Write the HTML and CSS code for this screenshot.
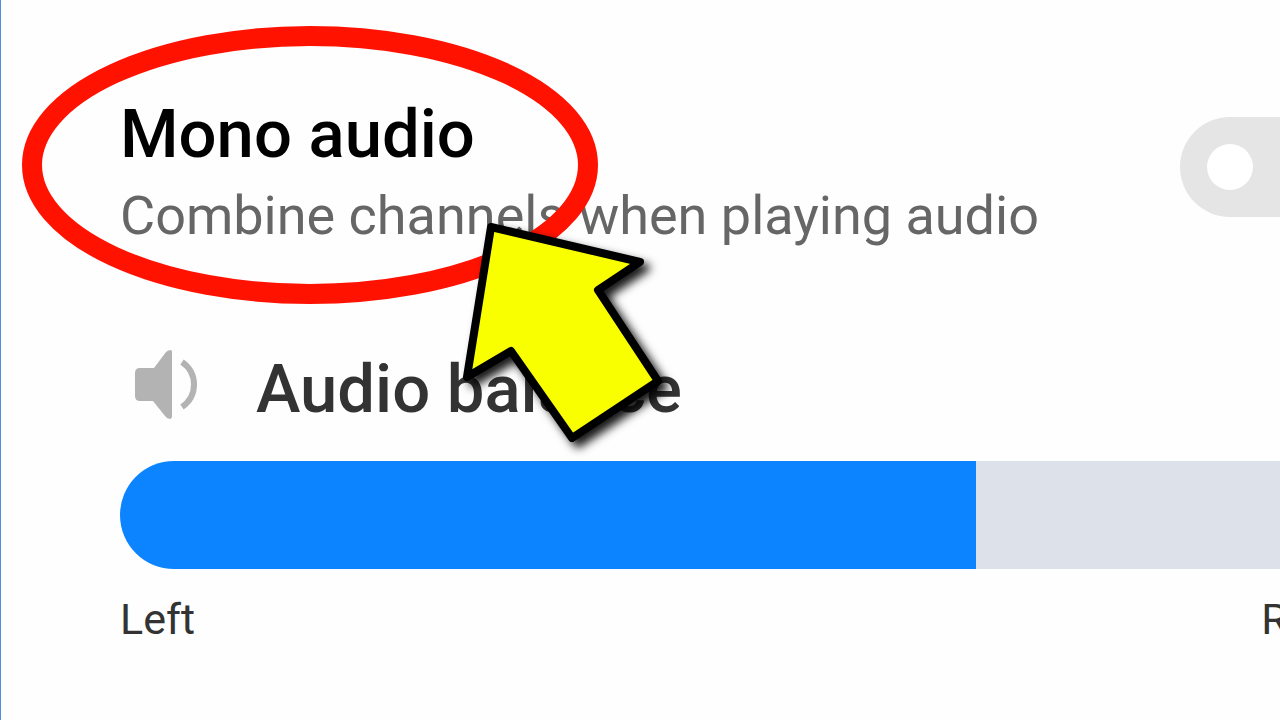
FILE: index.html
```html
<!DOCTYPE html>
<html lang="en">
<head>
    <meta charset="UTF-8">
    <meta name="viewport" content="width=device-width, initial-scale=1.0">
    <title>Audio settings</title>
    <link rel="stylesheet" href="styles.css">
</head>
<body>
    <main class="settings">
        <div class="setting">
            <div class="setting-text">
                <label class="title" for="mono">Mono audio</label>
                <p class="description" id="mono-description">Combine channels when playing audio</p>
            </div>
            <input class="toggle" type="checkbox" id="mono" aria-describedby="mono-description">
        </div>

        <div class="balance">
            <div class="balance-header">
                <svg class="speaker" viewBox="0 0 80 80" aria-hidden="true">
                    <path d="M20 19H34L46 3Q48 1 51 1Q52 1 52 4V66Q52 70 50 70Q47 70 45 67L33 52H20Q15 52 15 47V24Q15 19 20 19Z" fill="#b3b3b3"/>
                    <path d="M62 13C78 24 78 47 62 58" fill="none" stroke="#b3b3b3" stroke-width="6"/>
                </svg>
                <label class="title balance-title" for="balance">Audio balance</label>
            </div>
            <input class="slider" type="range" id="balance" min="0" max="100" value="69" style="--value: 69%">
            <div class="balance-ends">
                <span>Left</span>
                <span>Right</span>
            </div>
        </div>
    </main>

    <svg class="marks" width="700" height="480" viewBox="0 0 700 480" aria-hidden="true">
        <ellipse cx="310" cy="165" rx="278" ry="129" fill="none" stroke="#ff1200" stroke-width="20"/>
        <path class="arrow" d="M491 227L640 262L598 290L658 381L572 438L511 351L467 377Z"/>
    </svg>

    <script>
        const balance = document.getElementById("balance");
        balance.addEventListener("input", () => {
            balance.style.setProperty("--value", balance.value + "%");
        });
    </script>
</body>
</html>
```
FILE: styles.css
```css
* {
    box-sizing: border-box;
}

body {
    position: relative;
    margin: 0;
    min-height: 100vh;
    border-left: 1px solid #4c8fdc;
    background: #fefefe;
    color: #333;
    font-family: Roboto, "Liberation Sans", sans-serif;
    overflow: hidden;
}

/* the panel is wider than the window and runs off its right edge */
.settings {
    display: flex;
    flex-direction: column;
    gap: 106px;
    margin-right: -80px;
    padding: 90px 0 72px 119px;
}

.setting {
    display: flex;
    align-items: center;
    justify-content: space-between;
}

.setting-text {
    display: flex;
    flex-direction: column;
    gap: 11px;
}

.title {
    color: #000;
    font-size: 67px;
    font-weight: 500;
    line-height: 88px;
}

.description {
    margin: 0;
    color: #666;
    font-size: 54px;
    line-height: 54px;
}

.toggle {
    appearance: none;
    display: flex;
    align-items: center;
    flex-shrink: 0;
    width: 180px;
    height: 100px;
    margin: 0;
    padding: 0 27px;
    border-radius: 50px;
    background: #e5e5e5;
    cursor: pointer;
}

.toggle::before {
    content: "";
    width: 46px;
    height: 46px;
    border-radius: 50%;
    background: #fff;
}

.toggle:checked {
    justify-content: flex-end;
    background: #0d84ff;
}

.balance {
    display: flex;
    flex-direction: column;
}

.balance-header {
    display: flex;
    align-items: center;
    gap: 56px;
}

.speaker {
    width: 80px;
    height: 80px;
}

.balance-title {
    color: #333;
    line-height: 80px;
}

.slider {
    appearance: none;
    width: 100%;
    height: 108px;
    margin: 32px 0 26px;
    border-radius: 54px;
    background: linear-gradient(to right, #0d84ff var(--value), #dde1ea var(--value));
    cursor: pointer;
}

.slider::-webkit-slider-thumb {
    appearance: none;
    width: 1px;
    height: 108px;
    background: transparent;
}

.balance-ends {
    display: flex;
    justify-content: space-between;
    font-size: 43px;
    line-height: 48px;
}

.marks {
    position: absolute;
    top: 0;
    left: -1px;
    pointer-events: none;
}

.arrow {
    fill: #faff00;
    stroke: #000;
    stroke-width: 8px;
    stroke-linejoin: round;
    filter: drop-shadow(6px 6px 5px rgba(0, 0, 0, 0.9));
}
```
